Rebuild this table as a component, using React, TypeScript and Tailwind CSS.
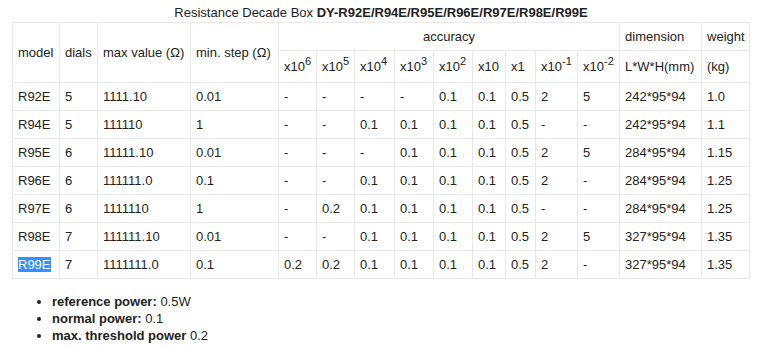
const rows: string[][] = [
  ["R92E", "5", "1111.10", "0.01", "-", "-", "-", "-", "0.1", "0.1", "0.5", "2", "5", "242*95*94", "1.0"],
  ["R94E", "5", "111110", "1", "-", "-", "0.1", "0.1", "0.1", "0.1", "0.5", "-", "-", "242*95*94", "1.1"],
  ["R95E", "6", "11111.10", "0.01", "-", "-", "-", "0.1", "0.1", "0.1", "0.5", "2", "5", "284*95*94", "1.15"],
  ["R96E", "6", "111111.0", "0.1", "-", "-", "0.1", "0.1", "0.1", "0.1", "0.5", "2", "-", "284*95*94", "1.25"],
  ["R97E", "6", "1111110", "1", "-", "0.2", "0.1", "0.1", "0.1", "0.1", "0.5", "-", "-", "284*95*94", "1.25"],
  ["R98E", "7", "111111.10", "0.01", "-", "-", "0.1", "0.1", "0.1", "0.1", "0.5", "2", "5", "327*95*94", "1.35"],
  ["R99E", "7", "1111111.0", "0.1", "0.2", "0.2", "0.1", "0.1", "0.1", "0.1", "0.5", "2", "-", "327*95*94", "1.35"],
];

const widths = [47, 38, 93, 88, 38, 38, 40, 39, 39, 33, 30, 42, 42, 82, 48];

const powers: (string | null)[] = ["6", "5", "4", "3", "2", null, "1", "-1", "-2"];

const cell = "border border-[#e8e8e8] px-[5px] text-left align-middle font-normal";

export default function App() {
  return (
    <div className="min-h-[347px] bg-white font-['Liberation_Sans',Arial,sans-serif] text-[13px] text-[#222]">
      <div className="ml-[12px] w-[738px]">
        <div className="pt-1 text-center leading-[18px]">
          Resistance Decade Box <b>DY-R92E/R94E/R95E/R96E/R97E/R98E/R99E</b>
        </div>
        <table className="w-[738px] table-fixed border-collapse border border-[#333] leading-[18px]">
          <colgroup>
            {widths.map((w, i) => (
              <col key={i} style={{ width: w }} />
            ))}
          </colgroup>
          <thead>
            <tr className="h-[28px]">
              <th rowSpan={2} className={cell}>model</th>
              <th rowSpan={2} className={cell}>dials</th>
              <th rowSpan={2} className={cell}>max value (Ω)</th>
              <th rowSpan={2} className={cell}>min. step (Ω)</th>
              <th colSpan={9} className={`${cell} !text-center`}>accuracy</th>
              <th className={cell}>dimension</th>
              <th className={cell}>weight</th>
            </tr>
            <tr className="h-[32px]">
              {powers.map((p, i) => (
                <th key={i} className={cell}>
                  {p === null ? "x10" : p === "1" ? "x1" : (
                    <>
                      x10<sup className="text-[11px]">{p}</sup>
                    </>
                  )}
                </th>
              ))}
              <th className={cell}>L*W*H(mm)</th>
              <th className={cell}>(kg)</th>
            </tr>
          </thead>
          <tbody>
            {rows.map((r, ri) => (
              <tr key={ri} className="h-[28px]">
                {r.map((v, ci) => (
                  <td key={ci} className={cell}>
                    {ri === 6 && ci === 0 ? (
                      <span className="bg-[#3390ff] text-white">{v}</span>
                    ) : (
                      v
                    )}
                  </td>
                ))}
              </tr>
            ))}
          </tbody>
        </table>
      </div>
      <ul className="mt-[14px] list-disc pl-[52px] leading-[17px]">
        <li>
          <b>reference power:</b> 0.5W
        </li>
        <li>
          <b>normal power:</b> 0.1
        </li>
        <li>
          <b>max. threshold power</b> 0.2
        </li>
      </ul>
    </div>
  );
}
